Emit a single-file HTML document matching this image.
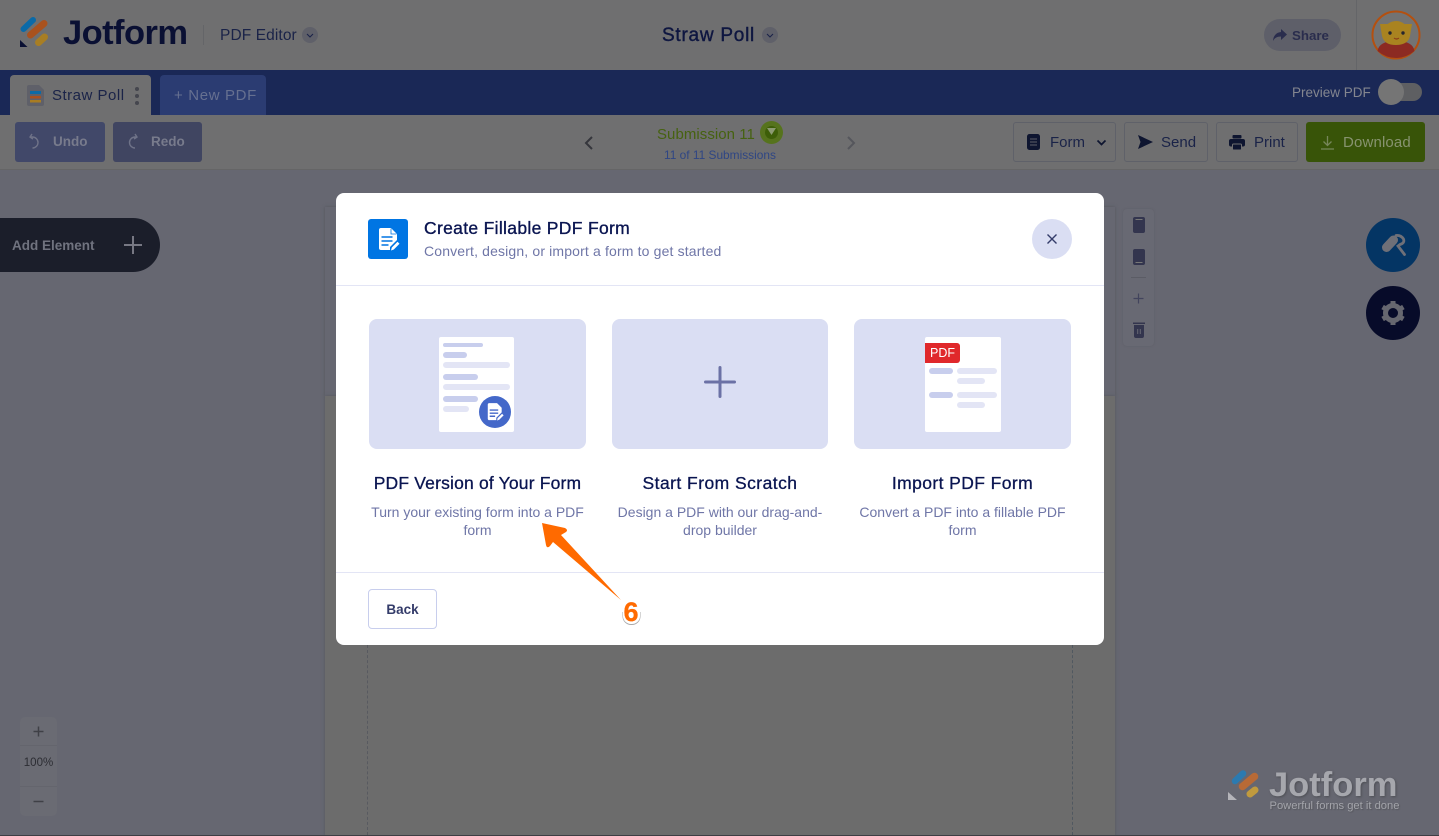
<!DOCTYPE html>
<html><head><meta charset="utf-8"><title>Create Fillable PDF Form</title>
<style>
html,body{margin:0;padding:0}
body{width:1439px;height:836px;position:relative;overflow:hidden;background:#666771;font-family:"Liberation Sans",sans-serif}
.a{position:absolute}
.t{position:absolute;white-space:nowrap;line-height:1}
.c{text-align:center;transform:translateX(-50%)}
.btn{position:absolute;box-sizing:border-box;border-radius:3px}
.ol{border:1px solid #5f6169;top:122px;height:40px}
.bar{position:absolute;border-radius:3px}
</style></head><body>
<!-- header -->
<div class="a" style="left:0;top:0;width:1439px;height:70px;background:#6f6f70"></div>
<svg class="a" style="left:18px;top:15px" width="32" height="34" viewBox="0 0 32 34">
<path d="M5.500 14 L15 5" stroke="#0a6aa8" stroke-width="6" stroke-linecap="round"/>
<path d="M12.500 20 L26 8.500" stroke="#a9521e" stroke-width="7" stroke-linecap="round"/>
<path d="M20.500 27.500 L26.500 22" stroke="#a87e24" stroke-width="7" stroke-linecap="round"/>
<path d="M2 25 L2 32 L9.500 32 Z" fill="#0a1033"/>
</svg>
<div class="t" style="left:63px;top:15.500px;font-size:34.500px;font-weight:700;color:#0a1033;letter-spacing:-.57px">Jotform</div>
<div class="a" style="left:203px;top:25px;width:1px;height:20px;background:#646568"></div>
<div class="t" style="left:220px;top:28px;font-size:15.500px;color:#1a2348;letter-spacing:.1px">PDF Editor</div>
<div class="a" style="left:302px;top:27px;width:16px;height:16px;border-radius:50%;background:#5f6069"></div>
<svg class="a" style="left:302px;top:27px" width="16" height="16"><path d="M5 7l3 3 3-3" fill="none" stroke="#1a2348" stroke-width="1.100"/></svg>
<div class="t" style="left:662px;top:26px;font-size:19px;font-weight:400;color:#0e1640;-webkit-text-stroke:.4px #0e1640;letter-spacing:.75px">Straw Poll</div>
<div class="a" style="left:762px;top:27px;width:16px;height:16px;border-radius:50%;background:#5f6069"></div>
<svg class="a" style="left:762px;top:27px" width="16" height="16"><path d="M5 7l3 3 3-3" fill="none" stroke="#1a2348" stroke-width="1.100"/></svg>
<div class="a" style="left:1264px;top:19px;width:77px;height:32px;border-radius:16px;background:#5e5f69"></div>
<svg class="a" style="left:1272px;top:28px" width="16" height="15" viewBox="0 0 16 15"><path d="M9 1l6 5.500-6 5.500V8.500C5 8.500 2.500 10 1 13c.3-5 3-8.500 8-9z" fill="#2a2d4d"/></svg>
<div class="t" style="left:1292px;top:28.500px;font-size:13.300px;font-weight:700;color:#2a2d4d">Share</div>
<div class="a" style="left:1356px;top:0;width:1px;height:70px;background:#646568"></div>
<svg class="a" style="left:1371px;top:10px" width="50" height="50" viewBox="0 0 50 50">
<circle cx="25" cy="25" r="23.500" fill="#737373" stroke="#b4500f" stroke-width="2"/>
<path d="M6.500 41 Q8 31 25 31 Q42 31 43.500 41 Q35 48 25 48 Q15 48 6.500 41z" fill="#8c2a22"/>
<path d="M9 14 L16.500 14 Q25 8 33.500 14 L41 14 L39 26 Q37 35 25 35 Q13 35 11 26z" fill="#a98320"/>
<circle cx="19" cy="23" r="1.700" fill="#26262e"/><circle cx="32" cy="23" r="1.700" fill="#26262e"/>
<path d="M23 28q2.500 2 5 0" stroke="#8a3a18" stroke-width="1.100" fill="none"/>
</svg>
<!-- blue bar -->
<div class="a" style="left:0;top:70px;width:1439px;height:45px;background:#1a2856"></div>
<div class="a" style="left:10px;top:75px;width:141px;height:40px;background:#6f6f70;border-radius:4px 4px 0 0"></div>
<svg class="a" style="left:27px;top:85px" width="18" height="21" viewBox="0 0 18 21"><path d="M2 0h10l5 5v14a2 2 0 0 1-2 2H2a2 2 0 0 1-2-2V2a2 2 0 0 1 2-2z" fill="#5f6069"/><rect x="3" y="6" width="11" height="3" fill="#0b6aa6"/><rect x="3" y="11" width="11" height="2.500" fill="#a8501e"/><rect x="3" y="15" width="11" height="2.500" fill="#a87c22"/></svg>
<div class="t" style="left:52px;top:88px;font-size:15px;color:#1a2348;letter-spacing:.5px">Straw Poll</div>
<div class="a" style="left:135px;top:87px;width:4px;height:4px;border-radius:50%;background:#45464e"></div>
<div class="a" style="left:135px;top:94px;width:4px;height:4px;border-radius:50%;background:#45464e"></div>
<div class="a" style="left:135px;top:101px;width:4px;height:4px;border-radius:50%;background:#45464e"></div>
<div class="a" style="left:160px;top:75px;width:106px;height:40px;background:#2b3c72;border-radius:4px 4px 0 0"></div>
<div class="t" style="left:174px;top:88px;font-size:15px;color:#667090;letter-spacing:.65px">+ New PDF</div>
<div class="t" style="left:1292px;top:86px;font-size:13.500px;color:#84868f">Preview PDF</div>
<div class="a" style="left:1382px;top:83px;width:40px;height:18px;border-radius:9px;background:#5e5f62"></div>
<div class="a" style="left:1378px;top:79px;width:26px;height:26px;border-radius:50%;background:#757575"></div>
<!-- toolbar -->
<div class="a" style="left:0;top:115px;width:1439px;height:55px;background:#6f6f70;border-bottom:1px solid #656566;box-sizing:border-box"></div>
<div class="btn" style="left:15px;top:122px;width:90px;height:40px;background:#414869"></div>
<svg class="a" style="left:28px;top:133px" width="14" height="18" viewBox="0 0 14 18"><path d="M4 1L2 4l3 2M2 4h2.500a5.500 5.500 0 1 1 0 11" fill="none" stroke="#6f7388" stroke-width="1.400"/></svg>
<div class="t" style="left:53px;top:135px;font-size:13.500px;font-weight:700;color:#787b8c">Undo</div>
<div class="btn" style="left:113px;top:122px;width:89px;height:40px;background:#404561"></div>
<svg class="a" style="left:126px;top:133px" width="14" height="18" viewBox="0 0 14 18"><path d="M9 1l2 3-3 2M11 4H9a5.500 5.500 0 1 0 0 11" fill="none" stroke="#6f7388" stroke-width="1.400"/></svg>
<div class="t" style="left:151px;top:135px;font-size:13.500px;font-weight:700;color:#787b8c">Redo</div>
<svg class="a" style="left:583px;top:135px" width="12" height="16" viewBox="0 0 12 16"><path d="M9 2L3 8l6 6" fill="none" stroke="#35363c" stroke-width="2"/></svg>
<svg class="a" style="left:845px;top:135px" width="12" height="16" viewBox="0 0 12 16"><path d="M3 2l6 6-6 6" fill="none" stroke="#55565c" stroke-width="2"/></svg>
<div class="t" style="left:657px;top:126.500px;font-size:15px;color:#466210;letter-spacing:.05px">Submission 11</div>
<div class="a" style="left:760px;top:121px;width:23px;height:23px;border-radius:50%;background:#56731d"></div>
<div class="a" style="left:765px;top:126px;width:13px;height:13px;border-radius:50%;background:#3d5e08"></div>
<svg class="a" style="left:767px;top:128px" width="9" height="8"><path d="M0 0h9L4.500 7z" fill="#8c9a72"/></svg>
<div class="t" style="left:664px;top:150px;font-size:11.900px;color:#2f4684">11 of 11 Submissions</div>
<div class="btn ol" style="left:1013px;width:103px"></div>
<svg class="a" style="left:1027px;top:134px" width="13" height="16"><rect width="13" height="16" rx="2.500" fill="#0e1530"/><path d="M3 5h7M3 8h7M3 11h7" stroke="#5f6069" stroke-width="1"/></svg>
<div class="t" style="left:1050px;top:135px;font-size:15px;color:#1a2348">Form</div>
<svg class="a" style="left:1096px;top:139px" width="11" height="8"><path d="M1.500 1.500L5.500 5.500l4-4" fill="none" stroke="#0e1530" stroke-width="1.700"/></svg>
<div class="btn ol" style="left:1124px;width:84px"></div>
<svg class="a" style="left:1138px;top:135px" width="15" height="14"><path d="M0 0l15 7L0 14l2.500-7z" fill="#0e1530"/></svg>
<div class="t" style="left:1161px;top:135px;font-size:15px;color:#1a2348">Send</div>
<div class="btn ol" style="left:1216px;width:82px"></div>
<svg class="a" style="left:1229px;top:135px" width="16" height="15" viewBox="0 0 16 15"><rect x="3.500" y="0" width="9" height="3.500" rx="1" fill="#0e1530"/><rect x="0" y="4" width="16" height="7.500" rx="2" fill="#0e1530"/><rect x="3.500" y="9" width="9" height="6" rx="1" fill="#0e1530" stroke="#6f6f70" stroke-width="1"/></svg>
<div class="t" style="left:1254px;top:135px;font-size:15px;color:#1a2348">Print</div>
<div class="btn" style="left:1306px;top:122px;width:119px;height:40px;background:#385408"></div>
<svg class="a" style="left:1320px;top:135px" width="15" height="15" viewBox="0 0 15 15"><path d="M7.500 1v9M3.500 6.500l4 4 4-4M1 14h13" fill="none" stroke="#76865a" stroke-width="1.300"/></svg>
<div class="t" style="left:1343px;top:135px;font-size:15px;color:#87936f;letter-spacing:.15px">Download</div>
<!-- canvas sheet -->
<div class="a" style="left:325px;top:207px;width:790px;height:189px;background:#666771;box-shadow:0 0 3px #55565c"></div>
<div class="a" style="left:325px;top:396px;width:790px;height:440px;background:#6c6c6c;box-shadow:0 0 3px #55565c"></div>
<div class="a" style="left:367px;top:645px;width:0;height:190px;border-left:1px dashed #585a60"></div>
<div class="a" style="left:1072px;top:645px;width:0;height:190px;border-left:1px dashed #505860"></div>
<div class="a" style="left:0;top:835px;width:1439px;height:1px;background:#3e3e44"></div>
<!-- Left add element -->
<div class="a" style="left:0;top:218px;width:160px;height:54px;background:#1b1e2a;border-radius:0 27px 27px 0"></div>
<div class="t" style="left:12px;top:239px;font-size:13.500px;font-weight:700;color:#70737f">Add Element</div>
<svg class="a" style="left:123px;top:235px" width="20" height="20"><path d="M10 1v18M1 10h18" stroke="#777883" stroke-width="2"/></svg>
<!-- right tool strip -->
<div class="a" style="left:1123px;top:209px;width:31px;height:137px;background:#686973;border-radius:4px;box-shadow:0 0 2px #5e5f68"></div>
<svg class="a" style="left:1133px;top:217px" width="12" height="16"><rect width="12" height="16" rx="2" fill="#33354e"/><rect x="2.500" y="2" width="7" height="1" fill="#777"/></svg>
<svg class="a" style="left:1133px;top:249px" width="12" height="16"><rect width="12" height="16" rx="2" fill="#33354e"/><rect x="2.500" y="13" width="7" height="1" fill="#777"/></svg>
<div class="a" style="left:1131px;top:277px;width:15px;height:1px;background:#5b5c65"></div>
<svg class="a" style="left:1132px;top:292px" width="13" height="13"><path d="M6.500 1.500v10M1.500 6.500h10" stroke="#42445d" stroke-width="1.200"/></svg>
<svg class="a" style="left:1133px;top:322px" width="12" height="16" viewBox="0 0 12 16"><path d="M0 .5h12v1.500H0zM1 3h10v11a2 2 0 0 1-2 2H3a2 2 0 0 1-2-2z" fill="#33354e"/><path d="M4.700 7v5M7.300 7v5" stroke="#686973"/></svg>
<!-- round buttons -->
<div class="a" style="left:1366px;top:218px;width:54px;height:54px;border-radius:50%;background:#043564"></div>
<svg class="a" style="left:1379px;top:232px" width="28" height="26" viewBox="0 0 28 26"><path d="M7.500 15.500L14.500 8" stroke="#6f7078" stroke-width="9" stroke-linecap="round"/><path d="M17 3.500Q22 3 24.500 7Q26 11 21 12.500L19 14L25.500 22.500" fill="none" stroke="#6f7078" stroke-width="2.800" stroke-linecap="round"/></svg>
<div class="a" style="left:1366px;top:286px;width:54px;height:54px;border-radius:50%;background:#070b29"></div>
<svg class="a" style="left:1380px;top:300px" width="26" height="26" viewBox="0 0 26 26"><g fill="none" stroke="#66676f"><circle cx="13" cy="13" r="7.500" stroke-width="5"/><path d="M13 1v4M13 21v4M2.600 7l3.500 2M19.900 17l3.500 2M2.600 19l3.500-2M19.900 9l3.500-2" stroke-width="5"/></g></svg>
<!-- zoom -->
<div class="a" style="left:20px;top:717px;width:37px;height:99px;background:#6a6b73;border-radius:5px"></div>
<div class="a" style="left:20px;top:745px;width:37px;height:1px;background:#64656d"></div>
<div class="a" style="left:20px;top:786px;width:37px;height:1px;background:#64656d"></div>
<svg class="a" style="left:32px;top:725px" width="13" height="13"><path d="M6.500 1.500v10M1.500 6.500h10" stroke="#3f4046" stroke-width="1.500"/></svg>
<div class="t c" style="left:38.500px;top:758px;font-size:11.500px;color:#2c2d33">100%</div>
<svg class="a" style="left:32px;top:795px" width="13" height="13"><path d="M1.500 6.500h10" stroke="#3f4046" stroke-width="1.500"/></svg>
<!-- watermark -->
<svg class="a" style="left:1228px;top:767px" width="34" height="36" viewBox="0 0 34 36">
<path d="M7 14 L15 6.500" stroke="#2b7ab0" stroke-width="6.500" stroke-linecap="round"/>
<path d="M14.500 19.500 L26.500 9.500" stroke="#b86a36" stroke-width="7.500" stroke-linecap="round"/>
<path d="M22 27 L27 23" stroke="#c09a3e" stroke-width="7" stroke-linecap="round"/>
<path d="M0 25v8h9z" fill="#b5b5ba"/>
</svg>
<div class="t" style="left:1269px;top:767.500px;font-size:34.500px;font-weight:700;color:#a6a7ad;text-shadow:1px 1px 2px #4e4f55">Jotform</div>
<div class="t" style="left:1269.500px;top:801px;font-size:11.200px;color:#a3a4aa;text-shadow:1px 1px 1px #55565c">Powerful forms get it done</div>
<!-- modal -->
<div class="a" style="left:336px;top:193px;width:768px;height:452px;background:#fff;border-radius:8px"></div>
<div class="a" style="left:368px;top:219px;width:40px;height:40px;background:#0075e3;border-radius:3px"></div>
<svg class="a" style="left:378px;top:228px" width="22" height="23" viewBox="0 0 22 23"><path d="M3 0h10l6 6v6l-7 7v3H3a2 2 0 0 1-2-2V2a2 2 0 0 1 2-2z" fill="#fff"/><path d="M3.500 9h11M3.500 13h11M3.500 17h7" stroke="#0075e3" stroke-width="1.500"/><path d="M13 .5v5.500h5.500" fill="none" stroke="#0075e3" stroke-width=".8"/><path d="M13 22.500l.8-3 5.700-5.700 2 2-5.700 5.700z" fill="#fff"/></svg>
<div class="t" style="left:424px;top:220px;font-size:17.500px;color:#0a1551;-webkit-text-stroke:.35px #0a1551;letter-spacing:.32px">Create Fillable PDF Form</div>
<div class="t" style="left:424px;top:244px;font-size:14px;color:#6f76a7;letter-spacing:.15px">Convert, design, or import a form to get started</div>
<div class="a" style="left:1032px;top:219px;width:40px;height:40px;border-radius:50%;background:#dadef3"></div>
<svg class="a" style="left:1046px;top:233px" width="12" height="12"><path d="M1.500 1.500l9 9M10.500 1.500l-9 9" stroke="#343c6a" stroke-width="1.400"/></svg>
<div class="a" style="left:336px;top:285px;width:768px;height:1px;background:#e3e5f5"></div>
<div class="a" style="left:369px;top:319px;width:217px;height:130px;background:#dadef3;border-radius:8px"></div>
<div class="a" style="left:612px;top:319px;width:216px;height:130px;background:#dadef3;border-radius:8px"></div>
<div class="a" style="left:854px;top:319px;width:217px;height:130px;background:#dadef3;border-radius:8px"></div>
<!-- card 1 illus -->
<div class="a" style="left:439px;top:336.500px;width:75px;height:95px;background:#fff;border-radius:2px"></div>
<div class="bar" style="left:443px;top:343px;width:40px;height:4px;background:#c8ceed"></div>
<div class="bar" style="left:443px;top:352px;width:24px;height:6px;background:#c8ceed"></div>
<div class="bar" style="left:443px;top:362px;width:67px;height:6px;background:#e3e5f5"></div>
<div class="bar" style="left:443px;top:374px;width:35px;height:6px;background:#c8ceed"></div>
<div class="bar" style="left:443px;top:384px;width:67px;height:6px;background:#e3e5f5"></div>
<div class="bar" style="left:443px;top:396px;width:35px;height:6px;background:#c8ceed"></div>
<div class="bar" style="left:443px;top:406px;width:26px;height:6px;background:#e3e5f5"></div>
<div class="a" style="left:479px;top:396px;width:32px;height:32px;border-radius:50%;background:#4468c9"></div>
<svg class="a" style="left:487px;top:403px" width="17" height="18" viewBox="0 0 22 23"><path d="M3 0h10l6 6v6l-7 7v3H3a2 2 0 0 1-2-2V2a2 2 0 0 1 2-2z" fill="#fff"/><path d="M3.500 9h11M3.500 13h11M3.500 17h7" stroke="#4468c9" stroke-width="1.800"/><path d="M13 22.500l.8-3 5.700-5.700 2 2-5.700 5.700z" fill="#fff"/></svg>
<!-- card 2 -->
<svg class="a" style="left:704px;top:366px" width="32" height="32"><path d="M16 1.500v29M1.500 16h29" stroke="#6b71a5" stroke-width="3" stroke-linecap="round"/></svg>
<!-- card 3 illus -->
<div class="a" style="left:925px;top:336.500px;width:76px;height:95px;background:#fff;border-radius:2px"></div>
<div class="a" style="left:925px;top:342.500px;width:34.500px;height:20px;background:#e0282b;border-radius:0 3px 3px 0"></div>
<div class="t" style="left:930px;top:346.500px;font-size:12.500px;color:#fff">PDF</div>
<div class="bar" style="left:929px;top:368px;width:24px;height:6px;background:#c8ceed"></div>
<div class="bar" style="left:957px;top:368px;width:40px;height:6px;background:#e3e5f5"></div>
<div class="bar" style="left:957px;top:378px;width:28px;height:6px;background:#e3e5f5"></div>
<div class="bar" style="left:929px;top:392px;width:24px;height:6px;background:#c8ceed"></div>
<div class="bar" style="left:957px;top:392px;width:40px;height:6px;background:#e3e5f5"></div>
<div class="bar" style="left:957px;top:402px;width:28px;height:6px;background:#e3e5f5"></div>
<!-- card text -->
<div class="t c" style="left:477.500px;top:475px;font-size:17.500px;color:#0a1551;-webkit-text-stroke:.3px #0a1551;letter-spacing:.18px">PDF Version of Your Form</div>
<div class="t c" style="left:720px;top:475px;font-size:17.500px;color:#0a1551;-webkit-text-stroke:.3px #0a1551;letter-spacing:.45px">Start From Scratch</div>
<div class="t c" style="left:962.500px;top:475px;font-size:17.500px;color:#0a1551;-webkit-text-stroke:.3px #0a1551;letter-spacing:.4px">Import PDF Form</div>
<div class="t c" style="left:477.500px;top:505px;font-size:14px;color:#6f76a7">Turn your existing form into a PDF</div>
<div class="t c" style="left:477.500px;top:523px;font-size:14px;color:#6f76a7">form</div>
<div class="t c" style="left:720px;top:505px;font-size:14px;color:#6f76a7">Design a PDF with our drag-and-</div>
<div class="t c" style="left:720px;top:523px;font-size:14px;color:#6f76a7">drop builder</div>
<div class="t c" style="left:962.500px;top:505px;font-size:14px;color:#6f76a7">Convert a PDF into a fillable PDF</div>
<div class="t c" style="left:962.500px;top:523px;font-size:14px;color:#6f76a7">form</div>
<div class="a" style="left:336px;top:572px;width:768px;height:1px;background:#e3e5f5"></div>
<div class="a" style="left:368px;top:589px;width:69px;height:40px;box-sizing:border-box;border:1px solid #c8ceed;border-radius:4px;background:#fff"></div>
<div class="t c" style="left:402.500px;top:602.500px;font-size:13.500px;font-weight:700;color:#343c6a">Back</div>
<!-- annotation arrow -->
<svg class="a" style="left:535px;top:515px" width="100" height="100" viewBox="0 0 100 100">
<path d="M7 8L30 13Q33.500 15 31 17L26 20L86 85L18 27L15 31Q12 34 11 30Z" fill="#ff6a00"/>
</svg>
<div class="a" style="left:623px;top:612px;width:17px;height:12px;background:#fff;border-radius:0 0 8px 8px;box-shadow:0 .5px 0 .5px #aaa"></div>
<div class="t" style="left:623.500px;top:599px;font-size:27px;font-weight:700;color:#ff6a00;-webkit-text-stroke:.3px #ff6a00">6</div>
</body></html>
